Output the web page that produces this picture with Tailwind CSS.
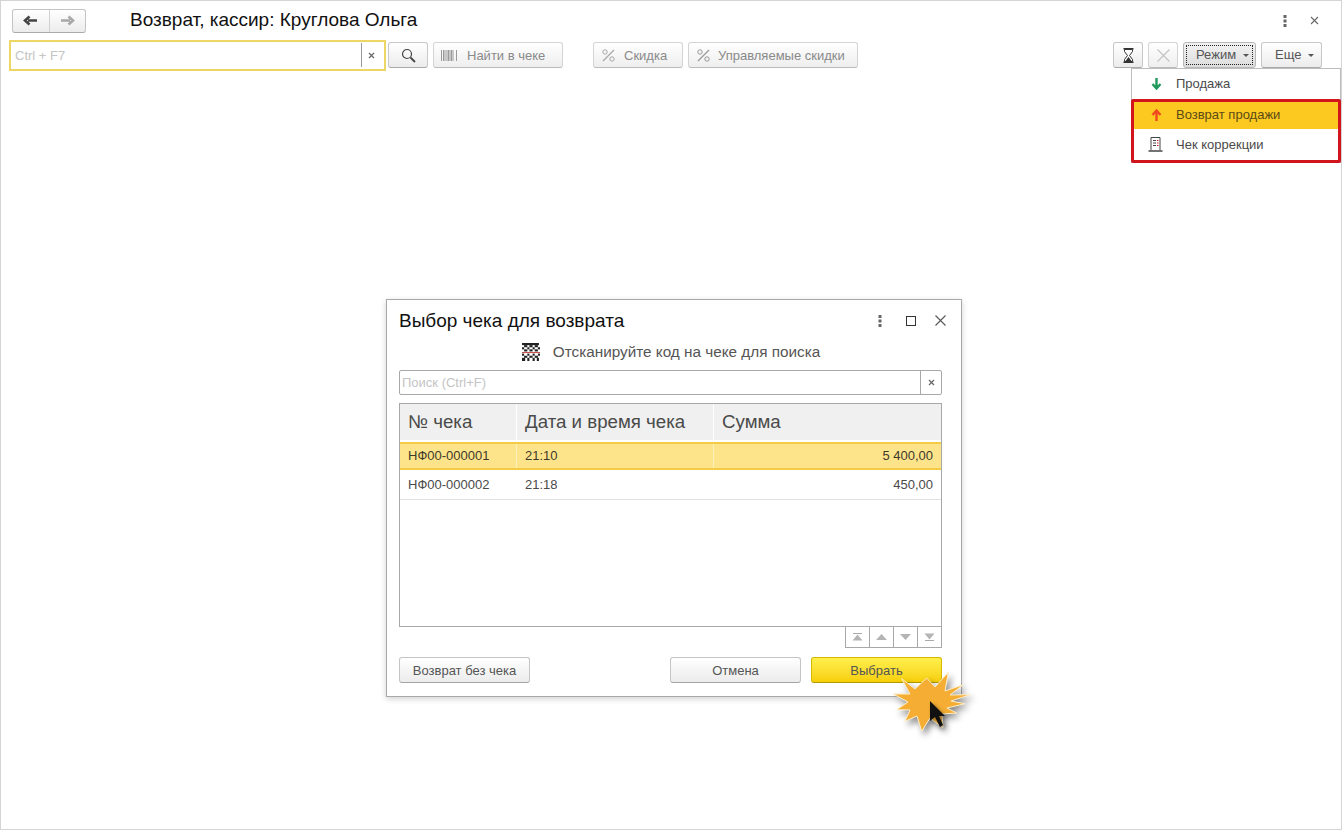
<!DOCTYPE html>
<html lang="ru">
<head>
<meta charset="utf-8">
<script src="https://cdn.jsdelivr.net/npm/@tailwindcss/browser@4"></script>
</head>
<body class="m-0 bg-white">
<div class="relative w-[1342px] h-[830px] overflow-hidden bg-white border border-[#d4d4d4] font-['Liberation_Sans',Arial,sans-serif] text-[13px] text-[#4a4a4a]">

  <!-- header row -->
  <div class="flex items-center h-[23px] mt-[8px] pl-[11px] pr-[22px]">
    <div class="flex w-[74px] h-[24px] rounded-[3px] border border-[#c4c4c4] border-b-[#aaaaaa] bg-gradient-to-b from-white to-[#ececec]">
      <div class="flex-1 flex items-center justify-center border-r border-[#d0d0d0]">
        <svg width="15" height="11" viewBox="0 0 15 11"><path d="M14 5.5H5M6.500 1.500 2 5.500l4.500 4" fill="none" stroke="#444" stroke-width="2.600"/></svg>
      </div>
      <div class="flex-1 flex items-center justify-center">
        <svg width="15" height="11" viewBox="0 0 15 11"><path d="M1 5.500h9M8.500 1.500l4.500 4-4.500 4" fill="none" stroke="#a8a8a8" stroke-width="2.600"/></svg>
      </div>
    </div>
    <div class="ml-[44px] pb-[2px] text-[19px] leading-[23px] text-[#111]">Возврат, кассир: Круглова Ольга</div>
    <div class="ml-auto flex items-center gap-[23px]">
      <svg width="4" height="12" viewBox="0 0 4 12"><g fill="#666"><rect x="0.500" y="0" width="3" height="3"/><rect x="0.500" y="4.500" width="3" height="3"/><rect x="0.500" y="9" width="3" height="3"/></g></svg>
      <svg width="9" height="9" viewBox="0 0 9 9"><path d="M1 1l7 7M8 1l-7 7" stroke="#666" stroke-width="1.100"/></svg>
    </div>
  </div>

  <!-- toolbar row -->
  <div class="flex items-center h-[30px] mt-[8px] pl-[8px] pr-[19px]">
    <div class="flex items-center w-[377px] h-[31px] border-2 border-[#ecd766] bg-white pl-[4px]">
      <span class="flex-1 pt-[1px] text-[#c4c4c4]">Ctrl + F7</span>
      <span class="w-px h-[24px] bg-[#9a9a9a]"></span>
      <span class="w-[22px] pr-[4px] flex justify-center">
        <svg width="7" height="7" viewBox="0 0 7 7"><path d="M1 1l5 5M6 1l-5 5" stroke="#666" stroke-width="1.200"/></svg>
      </span>
    </div>
    <div class="ml-[2px] flex items-center justify-center w-[40px] h-[26px] rounded-[3px] border border-[#c8c8c8] border-b-[#aaaaaa] bg-gradient-to-b from-white to-[#ececec]">
      <svg width="15" height="15" viewBox="0 0 15 15"><circle cx="6" cy="6" r="4.500" fill="none" stroke="#444" stroke-width="1.200"/><path d="M9.500 9.500l4.500 4.500" stroke="#444" stroke-width="1.800"/></svg>
    </div>
    <div class="ml-[5px] flex items-center w-[130px] h-[26px] pl-[7px] pt-[1px] rounded-[3px] border border-[#d4d4d4] border-b-[#bbbbbb] bg-gradient-to-b from-white to-[#eeeeee] text-[#8a8a8a]">
      <svg width="16" height="11" viewBox="0 0 16 11"><path d="M.5 0v11M2.500 0v11M4 0v11M6 0v11M7.500 0v11M9 0v11M10.500 0v11M12 0v11M15.500 0v11" stroke="#9a9a9a" stroke-width="1"/></svg>
      <span class="ml-[10px]">Найти в чеке</span>
    </div>
    <div class="ml-[30px] flex items-center w-[90px] h-[26px] pl-[8px] pt-[1px] rounded-[3px] border border-[#d4d4d4] border-b-[#bbbbbb] bg-gradient-to-b from-white to-[#eeeeee] text-[#8a8a8a]">
      <svg width="13" height="13" viewBox="0 0 13 13"><path d="M12 1 1 12" stroke="#a8a8a8" stroke-width="1.200"/><circle cx="3" cy="3" r="2.200" fill="none" stroke="#a8a8a8"/><circle cx="10" cy="10" r="2.200" fill="none" stroke="#a8a8a8"/></svg>
      <span class="ml-[9px]">Скидка</span>
    </div>
    <div class="ml-[5px] flex items-center w-[170px] h-[26px] pl-[8px] pt-[1px] rounded-[3px] border border-[#d4d4d4] border-b-[#bbbbbb] bg-gradient-to-b from-white to-[#eeeeee] text-[#8a8a8a]">
      <svg width="13" height="13" viewBox="0 0 13 13"><path d="M12 1 1 12" stroke="#999" stroke-width="1.200"/><circle cx="3" cy="3" r="2.200" fill="none" stroke="#999"/><circle cx="10" cy="10" r="2.200" fill="none" stroke="#999"/></svg>
      <span class="ml-[8px]">Управляемые скидки</span>
    </div>

    <div class="ml-auto flex items-center justify-center w-[30px] h-[26px] rounded-[3px] border border-[#c8c8c8] border-b-[#aaaaaa] bg-gradient-to-b from-white to-[#ececec]">
      <svg width="11" height="15" viewBox="0 0 11 15"><path d="M.5 .8h10M.5 14.200h10" stroke="#333" stroke-width="1.500"/><path d="M1.500 1.500h8v2L6.500 7.500l3 4v2h-8v-2l3-4-3-4z" fill="#fff" stroke="#333"/><path d="M2.500 13l3-4 3 4z" fill="#333"/></svg>
    </div>
    <div class="ml-[5px] flex items-center justify-center w-[30px] h-[26px] rounded-[3px] border border-[#d4d4d4] border-b-[#bbbbbb] bg-gradient-to-b from-white to-[#eeeeee]">
      <svg width="13" height="13" viewBox="0 0 13 13"><path d="M.5.5l12 12M12.500.5l-12 12" stroke="#c4c4c4" stroke-width="1.200"/></svg>
    </div>
    <div class="ml-[5px] flex items-center w-[73px] h-[26px] p-[2px] rounded-[3px] border border-[#b8b8b8] bg-gradient-to-b from-[#f2f2f2] to-[#dddddd]">
      <div class="flex items-center w-full h-full pl-[9px] border border-dotted border-[#222] text-[#555]">
        <span>Режим</span>
        <span class="ml-[7px] w-0 h-0 border-x-[3px] border-x-transparent border-t-[3px] border-t-[#555]"></span>
      </div>
    </div>
    <div class="ml-[5px] flex items-center w-[61px] h-[26px] pl-[13px] rounded-[3px] border border-[#c8c8c8] border-b-[#aaaaaa] bg-gradient-to-b from-white to-[#ececec] text-[#555]">
      <span>Еще</span>
      <span class="ml-[7px] w-0 h-0 border-x-[3px] border-x-transparent border-t-[3px] border-t-[#555]"></span>
    </div>
  </div>

  <!-- dropdown menu -->
  <div class="absolute left-[1130px] top-[67px] w-[210px] h-[95px] bg-white border border-[#bdbdbd]">
    <div class="flex items-center h-[30px] pl-[44px] relative">
      <svg class="absolute left-[19px] top-[9px]" width="11" height="12" viewBox="0 0 11 12"><path d="M5.500 0v10M1.500 6l4 4.500 4-4.500" fill="none" stroke="#1f9a5b" stroke-width="2.400"/></svg>
      <span>Продажа</span>
    </div>
    <div class="h-[64px] -ml-px -mr-px border-[3px] border-[#d2141c] rounded-[2px]">
      <div class="flex items-center h-[27px] pb-[1px] pl-[42px] relative bg-[#fbc920] text-[#5b4a16]">
        <svg class="absolute left-[17px] top-[7px]" width="11" height="12" viewBox="0 0 11 12"><path d="M5.500 12V2M1.500 6l4-4.500 4 4.500" fill="none" stroke="#f0491e" stroke-width="2.400"/></svg>
        <span>Возврат продажи</span>
      </div>
      <div class="flex items-center h-[31px] pl-[42px] relative">
        <svg class="absolute left-[14px] top-[8px]" width="15" height="15" viewBox="0 0 15 15"><path d="M3 13V.5h9V13" fill="#fff" stroke="#444"/><path d="M.5 14h14" stroke="#444" stroke-width="1.500"/><path d="M5 3.500h3M5 6h3M5 8.500h3" stroke="#444"/><path d="M9 3.500h1.500M9 6h1.500M9 8.500h1.500" stroke="#d2141c"/></svg>
        <span>Чек коррекции</span>
      </div>
    </div>
  </div>

  <!-- dialog -->
  <div class="absolute left-[385px] top-[298px] w-[576px] h-[398px] bg-white border border-[#a8a8a8] shadow-[0_2px_6px_rgba(0,0,0,0.18)] pl-[12px] pr-[19px]">
    <div class="flex items-center h-[41px]">
      <span class="pt-[1px] text-[19px] text-[#111]">Выбор чека для возврата</span>
      <div class="ml-auto flex items-center -mr-[4px]">
        <svg width="4" height="12" viewBox="0 0 4 12"><g fill="#666"><rect x="0.500" y="0" width="3" height="3"/><rect x="0.500" y="4.500" width="3" height="3"/><rect x="0.500" y="9" width="3" height="3"/></g></svg>
        <svg class="ml-[24px]" width="10" height="10" viewBox="0 0 10 10"><rect x="0.500" y="0.500" width="9" height="9" fill="none" stroke="#333"/></svg>
        <svg class="ml-[19px]" width="11" height="11" viewBox="0 0 11 11"><path d="M.5.500l10 10M10.500.500l-10 10" stroke="#555" stroke-width="1.100"/></svg>
      </div>
    </div>
    <div class="flex items-center justify-center h-[22px] text-[15.3px] text-[#555]">
      <svg class="mr-[12px]" width="20" height="18" viewBox="2 0 17 17">
        <g fill="#222">
          <rect x="2" y="0" width="16" height="2"/><rect x="4" y="2" width="3" height="2"/><rect x="9" y="2" width="3" height="2"/><rect x="14" y="2" width="3" height="2"/>
          <rect x="2" y="4" width="2" height="2"/><rect x="7" y="4" width="2" height="2"/><rect x="12" y="4" width="2" height="2"/><rect x="17" y="4" width="2" height="2"/>
          <rect x="4" y="6" width="3" height="2"/><rect x="9" y="6" width="3" height="2"/><rect x="14" y="6" width="3" height="2"/>
          <rect x="2" y="10" width="2" height="2"/><rect x="7" y="10" width="2" height="2"/><rect x="12" y="10" width="2" height="2"/><rect x="17" y="10" width="2" height="2"/>
          <rect x="4" y="12" width="3" height="2"/><rect x="9" y="12" width="3" height="2"/><rect x="14" y="12" width="3" height="2"/>
          <rect x="2" y="14" width="3" height="3"/><rect x="7" y="14" width="2" height="3"/><rect x="12" y="14" width="2" height="3"/><rect x="16" y="14" width="2" height="3"/>
        </g>
        <path d="M2 9h17" stroke="#c8504e" stroke-width="1"/>
      </svg>
      <span>Отсканируйте код на чеке для поиска</span>
    </div>
    <div class="flex items-center mt-[7px] h-[25px] border border-[#a8a8a8] rounded-[2px]">
      <span class="flex-1 pl-[2px] text-[#c4c4c4]">Поиск (Ctrl+F)</span>
      <span class="flex items-center justify-center w-[21px] h-full border-l border-[#a8a8a8]">
        <svg width="7" height="7" viewBox="0 0 7 7"><path d="M1 1l5 5M6 1l-5 5" stroke="#666" stroke-width="1.200"/></svg>
      </span>
    </div>
    <div class="mt-[8px] h-[224px] border border-[#a8a8a8]">
      <div class="flex h-[36px] bg-[#f0f0f0] text-[18.7px] text-[#4a4a4a]">
        <div class="w-[117px] pl-[8px] flex items-center border-r border-white">№ чека</div>
        <div class="w-[197px] pl-[8px] flex items-center border-r border-white">Дата и время чека</div>
        <div class="flex-1 pl-[8px] flex items-center">Сумма</div>
      </div>
      <div class="flex h-[28px] mt-[2px] bg-[#fde48a] border-y-2 border-[#f4cb45] text-[#3d3a2a]">
        <div class="w-[117px] pl-[8px] flex items-center border-r border-[#fdf0bb]">НФ00-000001</div>
        <div class="w-[197px] pl-[8px] flex items-center border-r border-[#fdf0bb]">21:10</div>
        <div class="flex-1 pr-[8px] flex items-center justify-end">5 400,00</div>
      </div>
      <div class="flex h-[30px] border-b border-[#e2e2e2]">
        <div class="w-[117px] pl-[8px] flex items-center">НФ00-000002</div>
        <div class="w-[197px] pl-[8px] flex items-center">21:18</div>
        <div class="flex-1 pr-[8px] flex items-center justify-end">450,00</div>
      </div>
    </div>
    <div class="flex justify-end">
      <div class="flex h-[21px] border border-t-0 border-[#a8a8a8]">
        <div class="flex items-center justify-center w-[24px] border-r border-[#a8a8a8]">
          <svg width="11" height="8" viewBox="0 0 11 8"><path d="M1 .5h9" stroke="#aaa"/><path d="M5.500 1.500 10.500 7.500H.5z" fill="#b4b4b4"/></svg>
        </div>
        <div class="flex items-center justify-center w-[24px] border-r border-[#a8a8a8]">
          <svg width="11" height="6" viewBox="0 0 11 6"><path d="M5.500 0 11 6H0z" fill="#b4b4b4"/></svg>
        </div>
        <div class="flex items-center justify-center w-[24px] border-r border-[#a8a8a8]">
          <svg width="11" height="6" viewBox="0 0 11 6"><path d="M5.500 6 11 0H0z" fill="#b4b4b4"/></svg>
        </div>
        <div class="flex items-center justify-center w-[23px]">
          <svg width="11" height="8" viewBox="0 0 11 8"><path d="M1 7.500h9" stroke="#aaa"/><path d="M5.500 6.500 10.500.5H.5z" fill="#b4b4b4"/></svg>
        </div>
      </div>
    </div>
    <div class="flex mt-[9px]">
      <div class="flex items-center justify-center w-[131px] h-[26px] pt-[1px] rounded-[3px] border border-[#c4c4c4] border-b-[#a4a4a4] bg-gradient-to-b from-white to-[#ececec] text-[#555]">Возврат без чека</div>
      <div class="ml-[140px] flex items-center justify-center w-[131px] h-[26px] pt-[1px] rounded-[3px] border border-[#c4c4c4] border-b-[#a4a4a4] bg-gradient-to-b from-white to-[#ececec] text-[#555]">Отмена</div>
      <div class="ml-[10px] flex items-center justify-center w-[131px] h-[26px] pt-[1px] rounded-[3px] border border-[#d6b800] border-b-[#b09a00] bg-gradient-to-b from-[#fff04a] to-[#f7cf00] text-[#555]">Выбрать</div>
    </div>
  </div>

  <!-- click burst and cursor -->
  <svg class="absolute left-[879px] top-[664px] drop-shadow-[3px_4px_3px_rgba(0,0,0,0.45)]" width="100" height="75" viewBox="880 665 100 75">
    <path d="M901.700 678.700 L915 689 L926.700 678 L935 687 L948.300 672.300 L945 691 L963.300 684.700 L950 695 L970 694.700 L951 701 L965 703.700 L947 708 L956.700 713 L942 714 L943 728 L930 718 L921.700 731.300 L917 716 L905 721.300 L910 710 L896.700 709.700 L908 702 L893.300 694 L910 694 Z" fill="#f5ae33" stroke="#fdeec8" stroke-width="1"/>
  </svg>
  <svg class="absolute left-[928px] top-[700px] drop-shadow-[2px_2px_2px_rgba(0,0,0,0.4)]" width="20" height="28" viewBox="0 0 20 28">
    <path d="M1 0 L1 20 L6 16 L11 26 L14 24 L10 15 L16 15 Z" fill="#111"/>
  </svg>
</div>
</body>
</html>
